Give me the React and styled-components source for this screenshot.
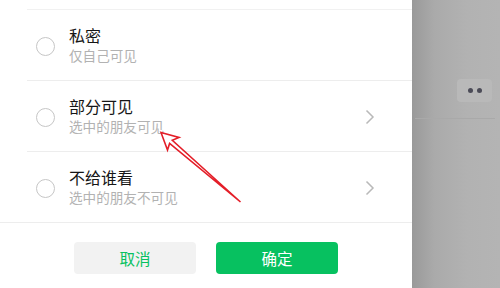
import React from "react";
import styled, { createGlobalStyle } from "styled-components";

const Global = createGlobalStyle`
  html, body { margin: 0; padding: 0; }
  body { font-family: "Noto Sans CJK SC", "Noto Sans", sans-serif; }
`;

const Screen = styled.div`
  position: relative;
  display: flex;
  width: 500px;
  height: 288px;
  overflow: hidden;
`;

const Panel = styled.div`
  width: 412px;
  background: #ffffff;
  display: flex;
  flex-direction: column;
  padding-top: 9px;
  box-sizing: border-box;
`;

const List = styled.div`
  margin-left: 27px;
  border-top: 1px solid #f1f1f1;
`;

const Row = styled.div`
  display: flex;
  align-items: center;
  height: 70px;
  margin-left: ${(p) => (p.$last ? "-27px" : "0")};
  padding-left: ${(p) => (p.$last ? "36px" : "9px")};
  padding-right: 37px;
  border-bottom: 1px solid #ededed;
`;

const Radio = styled.span`
  width: 17px;
  height: 17px;
  border: 1.3px solid #c6c6c6;
  border-radius: 50%;
  flex: none;
  margin-top: 2px;
`;

const Texts = styled.div`
  flex: 1;
  margin-left: 14px;
  display: flex;
  flex-direction: column;
  margin-top: -1px;
`;

const Title = styled.div`
  font-size: 16px;
  line-height: 21px;
  color: #161616;
`;

const Sub = styled.div`
  font-size: 13.6px;
  line-height: 18px;
  color: #b2b2b2;
`;

const Chevron = () => (
  <svg width="10" height="16" viewBox="0 0 10 16" style={{ flex: "none", marginTop: 2 }}>
    <path d="M1.5 1.5 L8 8 L1.5 14.5" fill="none" stroke="#b9b9b9" strokeWidth="1.5" />
  </svg>
);

const Footer = styled.div`
  display: flex;
  justify-content: center;
  gap: 20px;
  padding-top: 19px;
`;

const Button = styled.button`
  width: 122px;
  height: 32px;
  border: none;
  border-radius: 4px;
  font-family: inherit;
  font-size: 15.5px;
  background: ${(p) => (p.$primary ? "#07c160" : "#f2f2f2")};
  color: ${(p) => (p.$primary ? "#ffffff" : "#07c160")};
  padding: 0;
`;

const Side = styled.div`
  flex: 1;
  background: linear-gradient(to right, #999999 0px, #aaaaaa 22px, #b2b2b2 55px, #b4b4b4 100%);
  display: flex;
  flex-direction: column;
  align-items: flex-end;
  padding-top: 79px;
  padding-right: 8px;
  box-sizing: border-box;
`;

const DotButton = styled.div`
  width: 35px;
  height: 23px;
  border-radius: 4px;
  background: #b9b9b9;
  display: flex;
  align-items: center;
  justify-content: center;
  gap: 4px;
`;

const Dot = styled.span`
  width: 5px;
  height: 5px;
  border-radius: 50%;
  background: #4b4b57;
`;

const SideLine = styled.div`
  align-self: stretch;
  margin-left: 3px;
  margin-right: -3px;
  margin-top: 16px;
  height: 1px;
  background: #a9a9a9;
`;

const Overlay = styled.svg`
  position: absolute;
  left: 0;
  top: 0;
  pointer-events: none;
`;

const rows = [
  { title: "私密", sub: "仅自己可见", arrow: false },
  { title: "部分可见", sub: "选中的朋友可见", arrow: true },
  { title: "不给谁看", sub: "选中的朋友不可见", arrow: true },
];

export default function App() {
  return (
    <>
      <Global />
      <Screen>
        <Panel>
          <List>
            {rows.map((r, i) => (
              <Row key={r.title} $last={i === rows.length - 1}>
                <Radio />
                <Texts>
                  <Title>{r.title}</Title>
                  <Sub>{r.sub}</Sub>
                </Texts>
                {r.arrow && <Chevron />}
              </Row>
            ))}
          </List>
          <Footer>
            <Button>取消</Button>
            <Button $primary>确定</Button>
          </Footer>
        </Panel>
        <Side>
          <DotButton>
            <Dot />
            <Dot />
          </DotButton>
          <SideLine />
        </Side>
        <Overlay width="500" height="288" viewBox="0 0 500 288">
          <polygon
            points="161,132.5 179,137.5 172.3,140.3 240.5,202 169.6,143.4 167.5,150"
            fill="rgba(255,255,255,0.6)"
            stroke="#e41e28"
            strokeWidth="1.6"
            strokeLinejoin="miter"
          />
        </Overlay>
      </Screen>
    </>
  );
}
